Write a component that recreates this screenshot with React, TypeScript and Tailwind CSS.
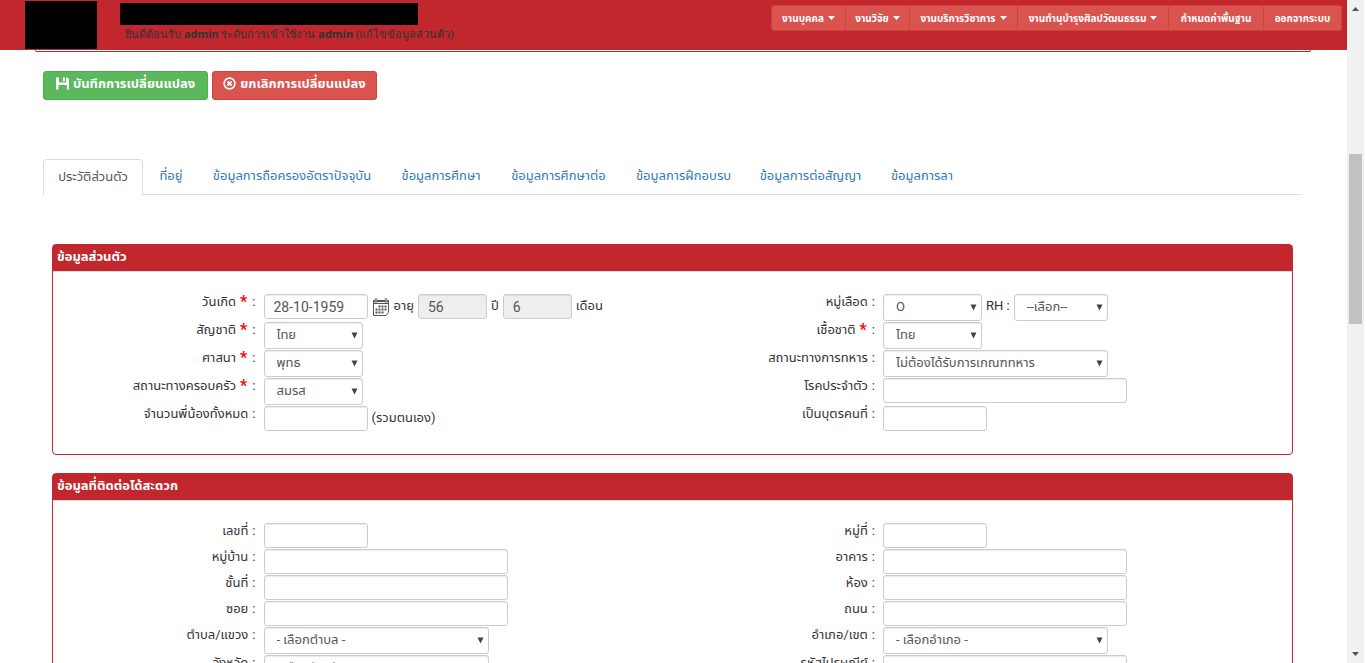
import React from 'react';

type Field = {
  id: string;
  label: string;
  required?: boolean;
  kind: 'input' | 'select';
  value?: string;
  width: string;
};

const MENU = [
  { title: 'งานบุคคล', caret: true, width: 'w-[74px]' },
  { title: 'งานวิจัย', caret: true, width: 'w-[64px]' },
  { title: 'งานบริการวิชาการ', caret: true, width: 'w-[108px]' },
  { title: 'งานทำนุบำรุงศิลปวัฒนธรรม', caret: true, width: 'w-[151px]' },
  { title: 'กำหนดค่าพื้นฐาน', caret: false, width: 'w-[95px]' },
  { title: 'ออกจากระบบ', caret: false, width: 'w-[77px]' },
];

const TABS = [
  { title: 'ประวัติส่วนตัว', width: 'w-[100px]' },
  { title: 'ที่อยู่', width: 'w-[52px]' },
  { title: 'ข้อมูลการถือครองอัตราปัจจุบัน', width: 'w-[186px]' },
  { title: 'ข้อมูลการศึกษา', width: 'w-[108px]' },
  { title: 'ข้อมูลการศึกษาต่อ', width: 'w-[123px]' },
  { title: 'ข้อมูลการฝึกอบรบ', width: 'w-[123px]' },
  { title: 'ข้อมูลการต่อสัญญา', width: 'w-[127px]' },
  { title: 'ข้อมูลการลา', width: 'w-[92px]' },
];

const ADDRESS_LEFT: Field[] = [
  { id: 'no', label: 'เลขที่', kind: 'input', width: 'w-[104px]' },
  { id: 'village', label: 'หมู่บ้าน', kind: 'input', width: 'w-[244px]' },
  { id: 'floor', label: 'ชั้นที่', kind: 'input', width: 'w-[244px]' },
  { id: 'soi', label: 'ซอย', kind: 'input', width: 'w-[244px]' },
  { id: 'tambon', label: 'ตำบล/แขวง', kind: 'select', value: '- เลือกตำบล -', width: 'w-[225px]' },
  { id: 'province', label: 'จังหวัด', kind: 'select', value: '- เลือกจังหวัด -', width: 'w-[225px]' },
];

const ADDRESS_RIGHT: Field[] = [
  { id: 'moo', label: 'หมู่ที่', kind: 'input', width: 'w-[104px]' },
  { id: 'building', label: 'อาคาร', kind: 'input', width: 'w-[244px]' },
  { id: 'room', label: 'ห้อง', kind: 'input', width: 'w-[244px]' },
  { id: 'road', label: 'ถนน', kind: 'input', width: 'w-[244px]' },
  { id: 'amphoe', label: 'อำเภอ/เขต', kind: 'select', value: '- เลือกอำเภอ -', width: 'w-[225px]' },
  { id: 'zip', label: 'รหัสไปรษณีย์', kind: 'input', width: 'w-[244px]' },
];

const TextBox = ({ id, width, value = '', disabled = false, label }: { id: string; width: string; value?: string; disabled?: boolean; label?: string }) => (
  <input
    id={id}
    type="text"
    aria-label={label}
    defaultValue={value}
    disabled={disabled}
    className={`${width} h-[25px] shrink-0 rounded-[3px] border border-[#ccc] px-[9px] text-sm text-[#555] shadow-[inset_0_1px_1px_rgba(0,0,0,0.075)] ${disabled ? 'bg-[#eee]' : 'bg-white'}`}
  />
);

const Dropdown = ({ id, width, value, label }: { id: string; width: string; value?: string; label?: string }) => (
  <div className={`relative h-[27px] shrink-0 ${width}`}>
    <select
      id={id}
      aria-label={label}
      className="h-full w-full appearance-none rounded-[3px] border border-[#ccc] bg-white pb-[2px] pl-3 text-[13px] text-[#555] shadow-[inset_0_1px_1px_rgba(0,0,0,0.075)]"
    >
      <option>{value}</option>
    </select>
    <svg className="pointer-events-none absolute top-[10px] right-[5px]" width="7" height="7" viewBox="0 0 7 7">
      <path d="M0.5 0.5h6L3.5 6.5z" fill="#444" />
    </svg>
  </div>
);

const Row = ({ id, label, required = false, height, children }: { id: string; label: string; required?: boolean; height: string; children: React.ReactNode }) => (
  <div className={`flex ${height}`}>
    <label htmlFor={id} className="flex h-4 w-1/3 shrink-0 items-center justify-end gap-1 pr-1 whitespace-nowrap">
      {label}
      {required && <span className="pr-px text-base leading-4 font-bold text-[#f00]">*</span>}
      <span>:</span>
    </label>
    <div className="ml-1 flex h-fit items-start gap-1">{children}</div>
  </div>
);

const Panel = ({ title, children }: { title: string; children: React.ReactNode }) => (
  <section className="rounded-[4px] border border-[#c1272d] bg-white">
    <h3 className="h-[27px] border-b border-[#ddd] bg-[#c1272d] px-1 text-[13px] leading-6 font-bold text-white">{title}</h3>
    <div className="grid grid-cols-2 pt-[22px] pb-5">{children}</div>
  </section>
);

const FieldColumn = ({ fields }: { fields: Field[] }) => (
  <div>
    {fields.map((field) => (
      <Row
        key={field.id}
        id={field.id}
        label={field.label}
        required={field.required}
        height={field.kind === 'select' ? 'h-7' : 'h-[26px]'}
      >
        {field.kind === 'select' ? (
          <Dropdown id={field.id} width={field.width} value={field.value} />
        ) : (
          <TextBox id={field.id} width={field.width} />
        )}
      </Row>
    ))}
  </div>
);

const SaveIcon = () => (
  <svg width="13" height="13" viewBox="0 0 13 13" fill="#fff">
    <path d="M0 0.500h3v5h7v-5h1.200L13 2.300V12.500h-2.200V8H2.500v4.500H0z" />
    <path d="M6.800 0.500h2.200v3.800H6.800z" />
  </svg>
);

const CancelIcon = () => (
  <svg width="13" height="13" viewBox="0 0 13 13" fill="none" stroke="#fff">
    <circle cx="6.500" cy="6.500" r="5.400" strokeWidth="1.600" />
    <path d="M4.500 4.500l4 4M8.500 4.500l-4 4" strokeWidth="1.800" />
  </svg>
);

const CalendarIcon = () => (
  <svg width="18" height="18" viewBox="0 0 18 18" fill="none" stroke="#555">
    <path d="M1.500 2.500h15v12l-2.500 3h-12.500z" fill="#fff" />
    <path d="M1 3.500h16M1 5.500h16" strokeWidth="1" />
    <path d="M4 0.500v4M14 0.500v4" strokeWidth="2.500" />
    <path d="M4 0.800v3M14 0.800v3" stroke="#fff" strokeWidth="0.800" />
    <path d="M6.500 8.500h9M3.500 11.500h12M3.500 14.500h9" strokeWidth="2" strokeDasharray="2 1" />
  </svg>
);

const App: React.FC = () => {
  return (
    <div className="flex h-screen overflow-hidden bg-white font-[Roboto,'Noto_Sans_Thai','Noto_Sans',sans-serif] text-[13px] text-[#333]">
      <div className="min-w-0 flex-1">
        {/* Top bar */}
        <header className="flex h-[50px] justify-between bg-[#c1272d] pr-[5px] pl-[25px]">
          <div className="flex">
            <div className="mt-px h-12 w-[72px] bg-black"></div>
            <div className="ml-[23px] pt-[3px]">
              <div className="h-[22px] w-[298px] bg-black"></div>
              <p className="pl-[5px] font-['Noto_Sans',sans-serif] text-[11px] leading-[18px] whitespace-nowrap">
                ยินดีต้อนรับ <b>admin</b> ระดับการเข้าใช้งาน <b>admin</b> (<a href="#profile">แก้ไขข้อมูลส่วนตัว</a>)
              </p>
            </div>
          </div>
          <nav className="mt-[5px] flex h-[26px] divide-x divide-[#d43f3a] overflow-hidden rounded-[3px] border border-[#d43f3a] bg-[#d9534f] text-[10px] font-bold text-white">
            {MENU.map((item) => (
              <button key={item.title} className={`flex shrink-0 items-center justify-center gap-1 whitespace-nowrap ${item.width}`}>
                {item.title}
                {item.caret && (
                  <svg width="7" height="4" viewBox="0 0 7 4">
                    <path d="M0 0h7L3.500 4z" fill="#fff" />
                  </svg>
                )}
              </button>
            ))}
          </nav>
        </header>

        {/* Bottom edge of the panel scrolled under the top bar */}
        <div className="mr-9 ml-[35px] h-[2px] rounded-b-[2px] border border-t-0 border-[#c1272d]"></div>

        <main className="pr-[45px] pl-[43px]">
          <div className="flex gap-1 pt-[19px] text-[13px] font-bold text-white">
            <button className="flex h-[29px] w-[165px] items-center justify-center gap-1 rounded-[3px] border border-[#4cae4c] bg-[#5cb85c] pb-1">
              <SaveIcon />
              บันทึกการเปลี่ยนแปลง
            </button>
            <button className="flex h-[29px] w-[165px] items-center justify-center gap-1 rounded-[3px] border border-[#d43f3a] bg-[#d9534f] pb-1">
              <CancelIcon />
              ยกเลิกการเปลี่ยนแปลง
            </button>
          </div>

          <nav className="mt-[59px] flex h-9 gap-[2px] border-b border-[#ddd]">
            {TABS.map((tab, i) => (
              <a
                key={tab.title}
                href="#tab"
                className={`h-9 shrink-0 pt-2 text-center leading-[18px] whitespace-nowrap ${tab.width} ${
                  i === 0 ? 'rounded-t-[4px] border border-b-0 border-[#ddd] bg-white text-[#555]' : 'text-[#337ab7]'
                }`}
              >
                {tab.title}
              </a>
            ))}
          </nav>

          <form className="flex flex-col gap-[18px] px-[9px] pt-[49px]">
            <Panel title="ข้อมูลส่วนตัว">
              <div>
                <Row id="birth" label="วันเกิด" required height="h-7">
                  <TextBox id="birth" width="w-[104px]" value="28-10-1959" />
                  <button type="button" aria-label="calendar" className="mt-1">
                    <CalendarIcon />
                  </button>
                  <span className="leading-6">อายุ</span>
                  <TextBox id="age-year" label="อายุ ปี" width="w-[69px]" value="56" disabled />
                  <span className="leading-6">ปี</span>
                  <TextBox id="age-month" label="อายุ เดือน" width="w-[69px]" value="6" disabled />
                  <span className="leading-6">เดือน</span>
                </Row>
                <Row id="nation" label="สัญชาติ" required height="h-7">
                  <Dropdown id="nation" width="w-[99px]" value="ไทย" />
                </Row>
                <Row id="religion" label="ศาสนา" required height="h-7">
                  <Dropdown id="religion" width="w-[99px]" value="พุทธ" />
                </Row>
                <Row id="family" label="สถานะทางครอบครัว" required height="h-7">
                  <Dropdown id="family" width="w-[99px]" value="สมรส" />
                </Row>
                <Row id="siblings" label="จำนวนพี่น้องทั้งหมด" height="h-7">
                  <TextBox id="siblings" width="w-[104px]" />
                  <span className="leading-6">(รวมตนเอง)</span>
                </Row>
              </div>
              <div>
                <Row id="blood" label="หมู่เลือด" height="h-7">
                  <Dropdown id="blood" width="w-[99px]" value="O" />
                  <label htmlFor="rh" className="leading-6">RH :</label>
                  <Dropdown id="rh" width="w-[94px]" value="--เลือก--" />
                </Row>
                <Row id="race" label="เชื้อชาติ" required height="h-7">
                  <Dropdown id="race" width="w-[99px]" value="ไทย" />
                </Row>
                <Row id="military" label="สถานะทางการทหาร" height="h-7">
                  <Dropdown id="military" width="w-[225px]" value="ไม่ต้องได้รับการเกณฑทหาร" />
                </Row>
                <Row id="disease" label="โรคประจำตัว" height="h-7">
                  <TextBox id="disease" width="w-[244px]" />
                </Row>
                <Row id="child" label="เป็นบุตรคนที่" height="h-7">
                  <TextBox id="child" width="w-[104px]" />
                </Row>
              </div>
            </Panel>

            <Panel title="ข้อมูลที่ติดต่อได้สะดวก">
              <FieldColumn fields={ADDRESS_LEFT} />
              <FieldColumn fields={ADDRESS_RIGHT} />
            </Panel>
          </form>
        </main>
      </div>

      {/* Scroll bar */}
      <div className="mr-[2px] flex w-[17px] shrink-0 flex-col items-center justify-between bg-[#f1f1f1] py-[7px]">
        <svg width="7" height="4" viewBox="0 0 7 4">
          <path d="M0 4h7L3.500 0z" fill="#505050" />
        </svg>
        <div className="flex w-full flex-1 flex-col items-center pt-[143px]">
          <div className="h-[170px] w-[13px] bg-[#c1c1c1]"></div>
        </div>
        <svg width="7" height="4" viewBox="0 0 7 4">
          <path d="M0 0h7L3.500 4z" fill="#505050" />
        </svg>
      </div>
    </div>
  );
};

export default App;
